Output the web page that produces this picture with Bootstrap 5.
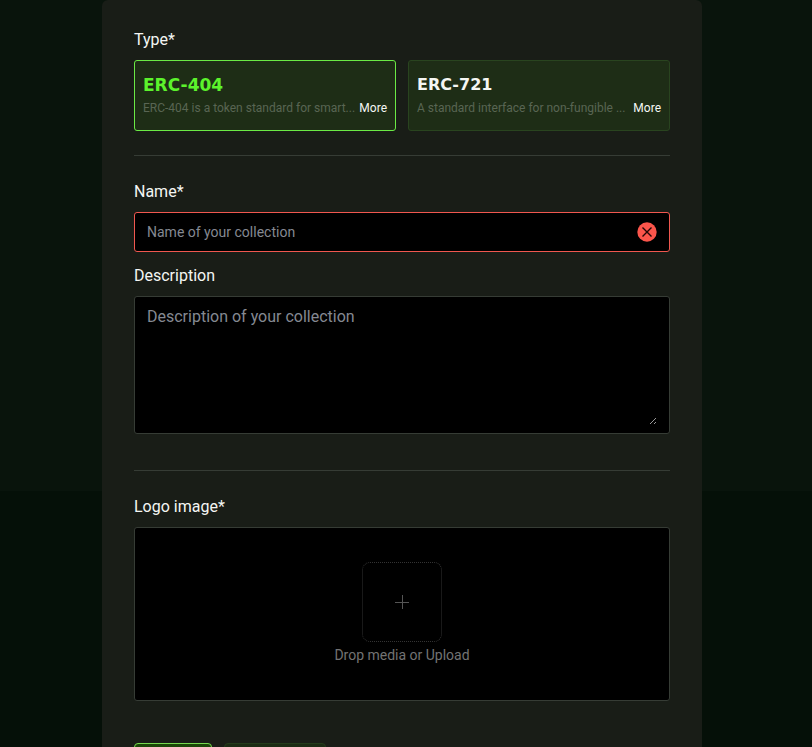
<!DOCTYPE html>
<html lang="en">
<head>
<meta charset="utf-8">
<meta name="viewport" content="width=device-width, initial-scale=1">
<title>Create collection</title>
<link href="https://cdn.jsdelivr.net/npm/bootstrap@5.3.0/dist/css/bootstrap.min.css" rel="stylesheet">
<style>
  body { font-family: Roboto, sans-serif; font-size: 16px; line-height: 24px; color: #f4f6f3; background: #040f07; }
  .page { background: linear-gradient(#09140c 0 491px, #051008 491px); }
  .panel { max-width: 600px; padding: 28px 32px 32px; background: #191d17; border-radius: 6px 6px 0 0; }
  .type-grid { gap: 12px; }
  .type-card { min-width: 0; padding: 12px 8px 10px; border: 1px solid #29441f; border-radius: 3px; background: #1e2d16; }
  .type-card:has(input:checked) { border-color: #6bea45; }
  .type-name { font-family: "DejaVu Sans", sans-serif; font-size: 17px; font-weight: 700; cursor: pointer; }
  .type-name-alt { font-size: 16px; }
  input:checked + .type-name { color: #5cf32c; }
  .type-info { font-size: 12px; line-height: 23px; color: #596553; }
  .more, .more:hover { color: #f4f6f3; line-height: 23px; font-size: 12px; }
  .rule { height: 1px; margin: 24px 0; background: #363c35; border: 0; opacity: 1; }
  .rule-wide { margin-top: 36px; }
  .field { padding: 8px 12px; border: 1px solid #363c35; border-radius: 3px; background: #000; }
  .field-error { border-color: #f0574f; }
  .field input, .field textarea { min-width: 0; padding: 0; border: 0; outline: 0; color: #f4f6f3; background: transparent; }
  .field input { font-size: 14px; line-height: 22px; }
  .field textarea { height: 120px; resize: vertical; color-scheme: dark; }
  .field ::placeholder { color: #858992; opacity: 1; }
  .drop { padding: 34px 12px 32px; cursor: pointer; color: #737373; font-size: 14px; line-height: 26px; }
  .drop-box { width: 80px; height: 80px; border: 1px dotted #333; border-radius: 8px; }
  .actions { margin-top: 42px; gap: 12px; }
  .action { height: 40px; border-radius: 4px; }
  .action-main { width: 78px; background: #1b4708; border-color: #76d84e; }
  .action-alt { width: 102px; background: #1b2b14; border-color: #243b1b; }
</style>
</head>
<body>
<main class="page vh-100 overflow-hidden pe-2">
  <form class="panel mx-auto">
    <fieldset>
      <legend class="fs-6 lh-base mb-2">Type*</legend>
      <div class="type-grid d-flex">
        <div class="type-card flex-fill w-50">
          <input class="btn-check" type="radio" name="type" id="erc404" checked>
          <label class="type-name d-block" for="erc404">ERC-404</label>
          <div class="type-info d-flex justify-content-between">
            <span class="text-nowrap">ERC-404 is a token standard for smart...</span>
            <button type="button" class="more btn p-0 border-0">More</button>
          </div>
        </div>
        <div class="type-card flex-fill w-50">
          <input class="btn-check" type="radio" name="type" id="erc721">
          <label class="type-name type-name-alt d-block" for="erc721">ERC-721</label>
          <div class="type-info d-flex justify-content-between">
            <span class="text-nowrap">A standard interface for non-fungible ...</span>
            <button type="button" class="more btn p-0 border-0">More</button>
          </div>
        </div>
      </div>
    </fieldset>
    <hr class="rule">
    <label class="d-block mb-2" for="name">Name*</label>
    <div class="field field-error d-flex align-items-center">
      <input class="flex-fill" type="text" id="name" placeholder="Name of your collection">
      <svg width="20" height="20" viewBox="0 0 20 20" aria-hidden="true"><circle cx="10" cy="10" r="9.7" fill="#fb554b"/><path d="M5.5 5.5l9 9M14.5 5.5l-9 9" stroke="#210605" stroke-width="1.4" fill="none"/></svg>
    </div>
    <label class="d-block mt-2 pt-1 mb-2" for="description">Description</label>
    <div class="field">
      <textarea class="d-block w-100" id="description" placeholder="Description of your collection"></textarea>
    </div>
    <hr class="rule rule-wide">
    <label class="d-block mb-2" for="logo">Logo image*</label>
    <label class="field drop d-flex flex-column align-items-center" for="logo">
      <span class="drop-box d-flex align-items-center justify-content-center">
        <svg width="16" height="16" viewBox="0 0 16 16" aria-hidden="true"><path d="M8.5 1v14M1 8.5h14" stroke="#555" fill="none"/></svg>
      </span>
      <span>Drop media or Upload</span>
      <input class="visually-hidden" type="file" id="logo">
    </label>
    <div class="actions d-flex">
      <button type="submit" class="action action-main btn" aria-label="Create"></button>
      <button type="button" class="action action-alt btn" aria-label="Cancel"></button>
    </div>
  </form>
</main>
<script src="https://cdn.jsdelivr.net/npm/bootstrap@5.3.0/dist/js/bootstrap.bundle.min.js"></script>
</body>
</html>
